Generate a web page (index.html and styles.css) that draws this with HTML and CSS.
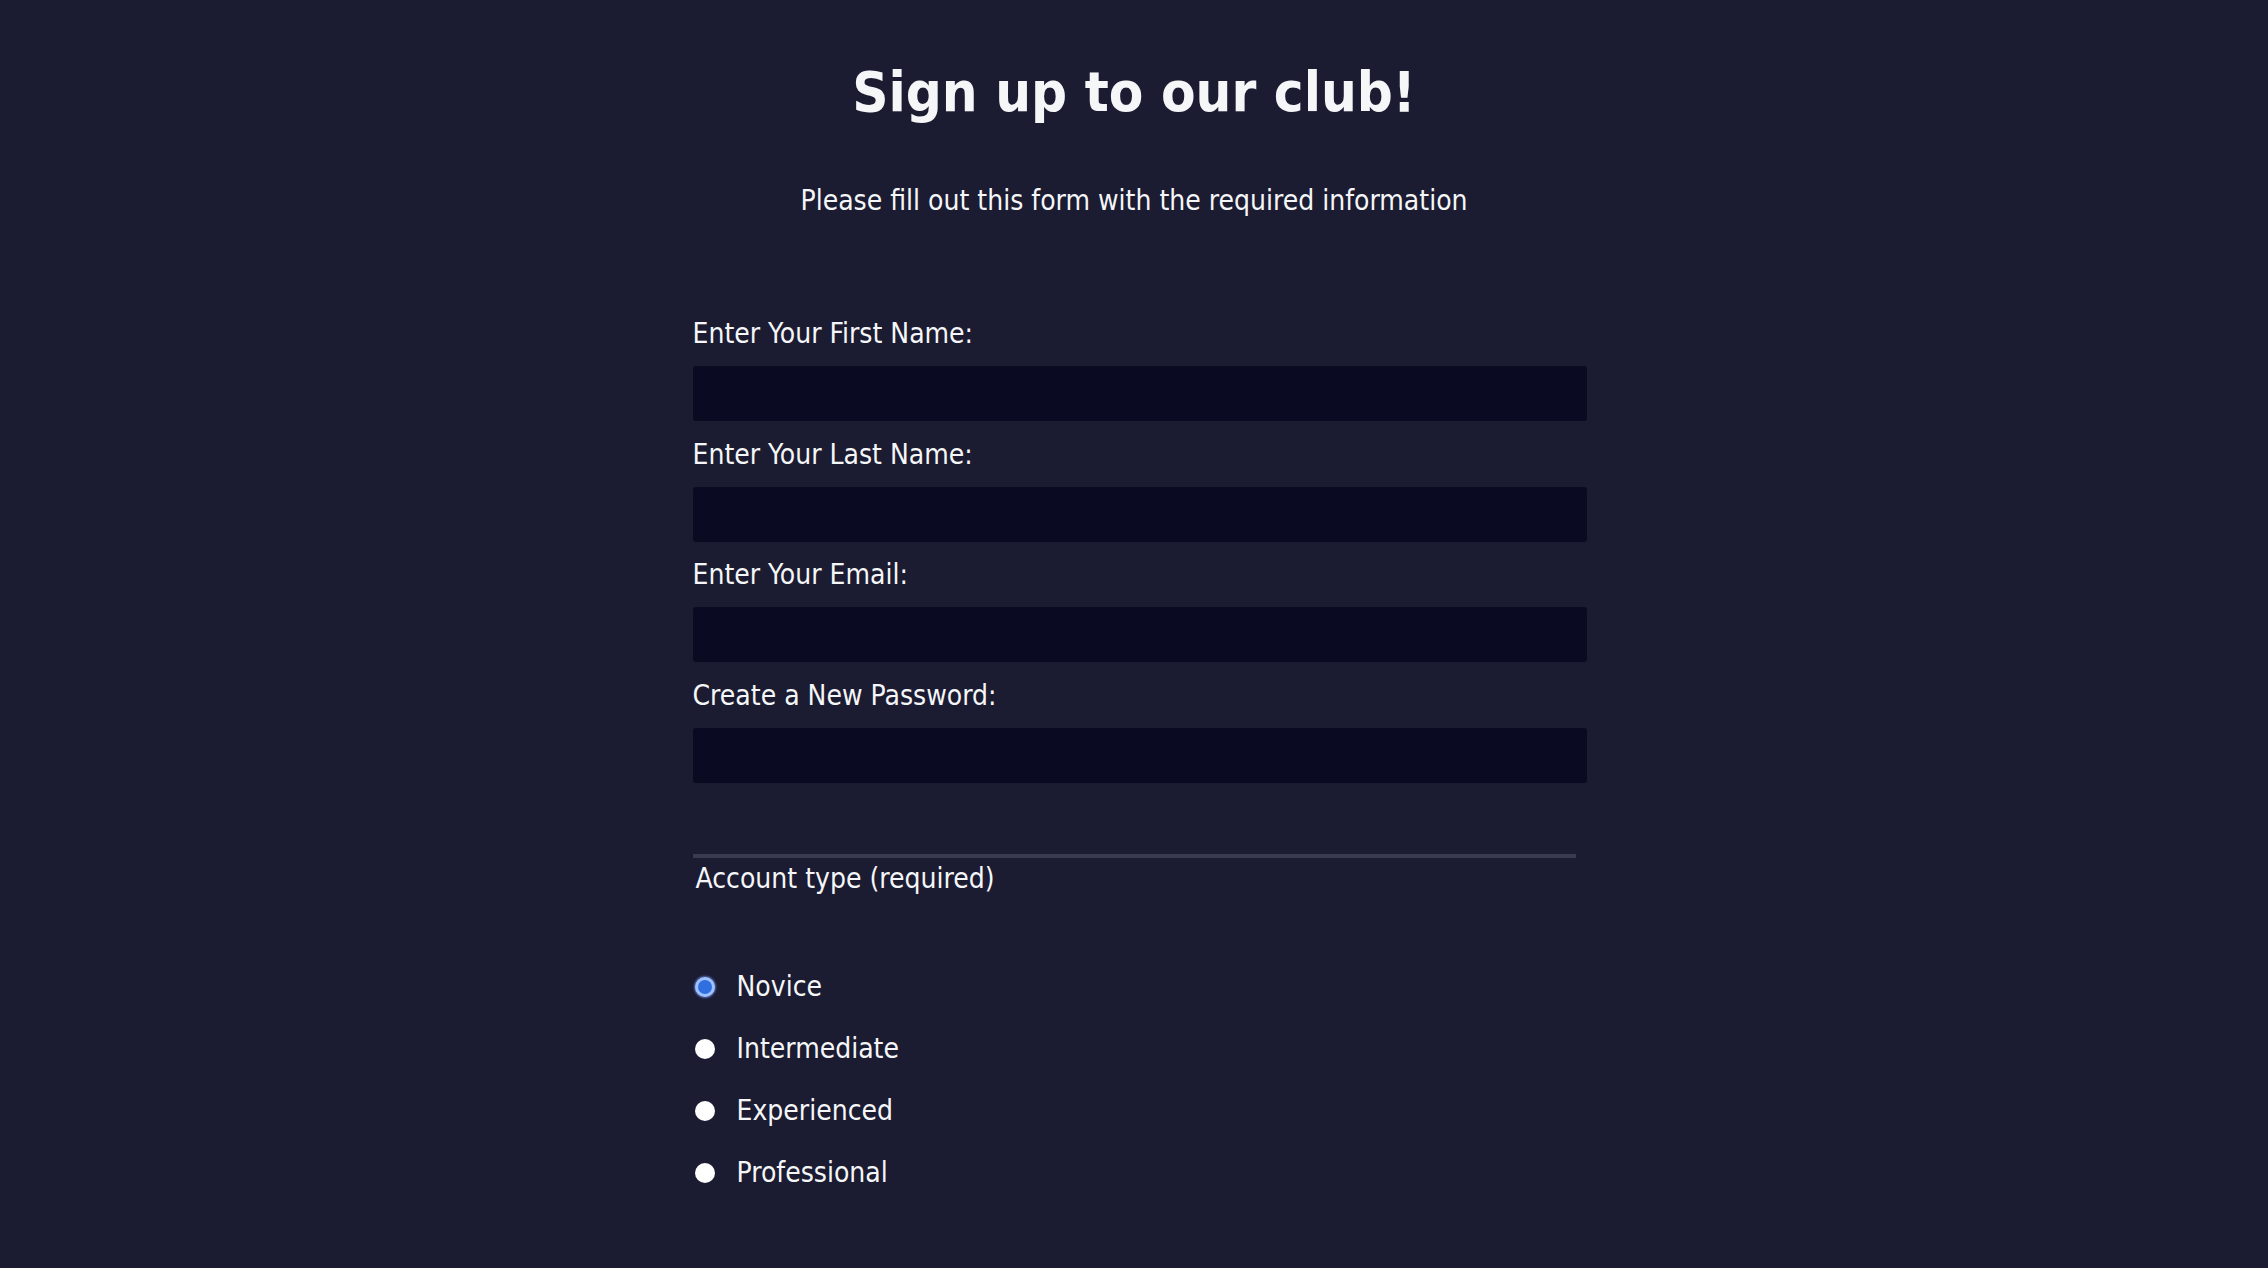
FILE: index.html
```html
<!DOCTYPE html>
<html lang="en">
<head>
<meta charset="utf-8">
<title>Sign up to our club!</title>
<link rel="stylesheet" href="styles.css">
</head>
<body>
<h1 class="title">Sign up to our club!</h1>
<p class="subtitle">Please fill out this form with the required information</p>
<form class="form">
  <div class="fields">
    <label class="field">Enter Your First Name:<input class="input" type="text"></label>
    <label class="field">Enter Your Last Name:<input class="input" type="text"></label>
    <label class="field">Enter Your Email:<input class="input" type="email"></label>
    <label class="field">Create a New Password:<input class="input" type="password"></label>
  </div>
  <div class="account">
    <div class="legend">Account type (required)</div>
    <div class="radios">
      <label class="radio-row"><span class="radio checked"></span>Novice</label>
      <label class="radio-row"><span class="radio"></span>Intermediate</label>
      <label class="radio-row"><span class="radio"></span>Experienced</label>
      <label class="radio-row"><span class="radio"></span>Professional</label>
    </div>
  </div>
</form>
</body>
</html>
```
FILE: styles.css
```css
html, body {
  margin: 0;
  padding: 0;
  background: #1b1b32;
  color: #f5f6f7;
  font-family: "DejaVu Sans Condensed", "DejaVu Sans", sans-serif;
}
body {
  height: 1268px;
  overflow: hidden;
}
.title {
  margin: 0;
  padding-top: 62px;
  text-align: center;
  font-size: 56px;
  line-height: 60px;
  font-weight: bold;
}
.subtitle {
  margin: 63px 0 0;
  text-align: center;
  font-size: 28px;
  line-height: 32px;
}
.form {
  width: 883px;
  margin: 101px auto 0;
}
.fields {
  display: flex;
  flex-direction: column;
}
.field {
  display: flex;
  flex-direction: column;
  font-size: 28px;
  line-height: 32px;
  height: 120.5px;
}
.input {
  display: block;
  margin-top: 16px;
  width: 894px;
  height: 55px;
  box-sizing: border-box;
  border: none;
  border-radius: 3px;
  background: #0a0a23;
}
.account {
  margin-top: 54px;
  border-top: 4px solid #3b3b4f;
  width: 883px;
}
.legend {
  padding: 3px 0 0 3px;
  font-size: 28px;
  line-height: 36px;
}
.radios {
  margin-top: 73px;
  display: flex;
  flex-direction: column;
  gap: 29px;
}
.radio-row {
  display: flex;
  align-items: center;
  gap: 22px;
  font-size: 28px;
  line-height: 33px;
  padding-left: 2px;
}
.radio {
  width: 20px;
  height: 20px;
  border-radius: 50%;
  background: #ffffff;
  box-sizing: border-box;
}
.radio.checked {
  background: #2f6fe0;
  border: 3px solid #9ec1ff;
  box-shadow: 0 0 2px 1px rgba(120, 160, 255, 0.6);
}
```
